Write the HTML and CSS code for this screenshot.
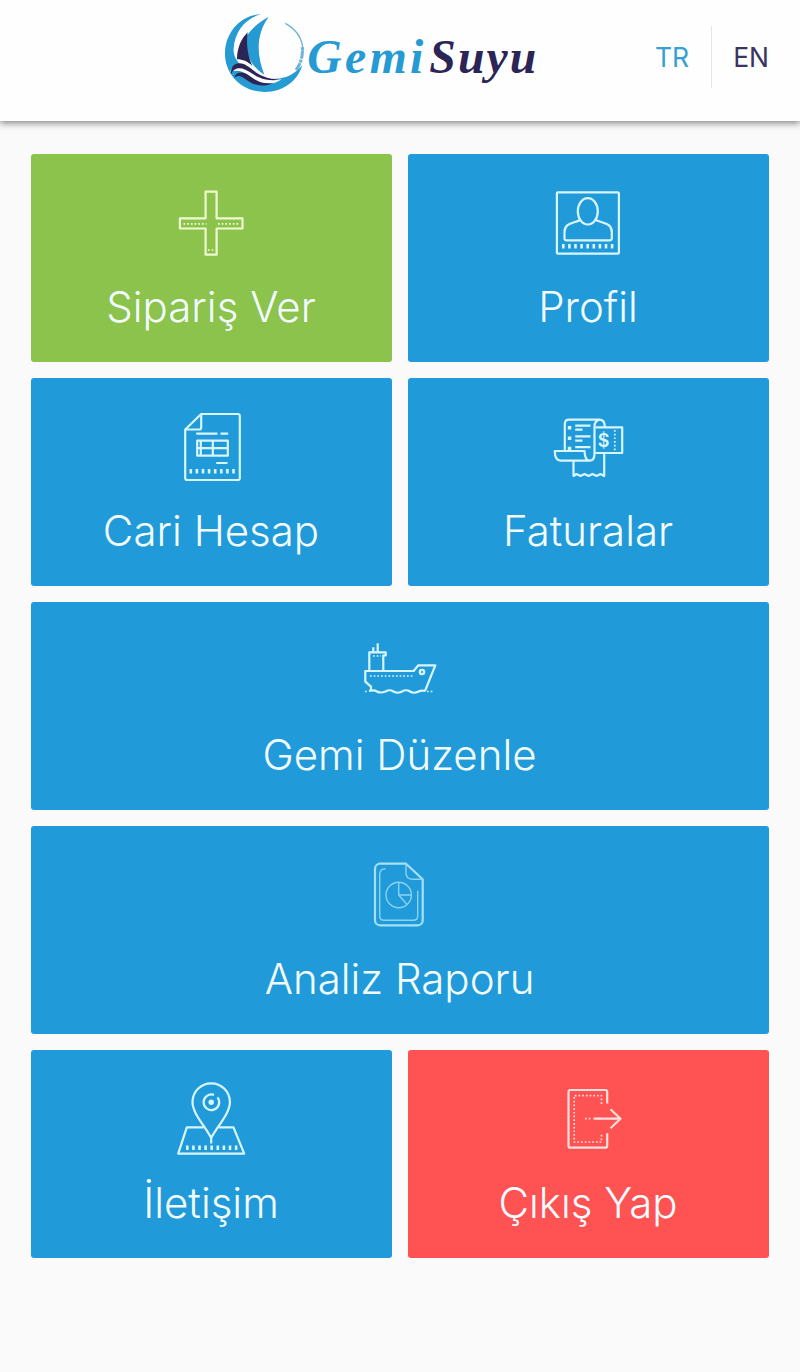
FILE: index.html
```html
<!DOCTYPE html>
<html lang="tr">
<head>
    <meta charset="UTF-8">
    <meta name="viewport" content="width=device-width, initial-scale=1.0">
    <title>GemiSuyu</title>
    <link rel="stylesheet" href="styles.css">
</head>
<body>

    <header class="header">
        <svg class="logo" viewBox="0 0 1005 330" aria-label="GemiSuyu">
            <!-- ring -->
            <path class="logo-blue" d="M138 28C75 30 30 85 30 146c0 64 52 115 120 115 56 0 98-34 112-80-25 28-52 43-92 40-30-4-49-29-78-31-24-15-38-35-36-60 3-50 36-91 82-102z"/>
            <path class="logo-line" d="M211 55c33 18 52 47 53 83"/>
            <path class="logo-line wide-line" d="M243 195c15-20 21-42 19-70"/>
            <!-- sails -->
            <path class="logo-blue" d="M161 36c-24 12-50 32-66 57-4 38 0 83 53 116-24-61-25-121 13-173z"/>
            <path class="logo-navy" d="M98 82C80 100 66 128 66 163c17 0 32 6 46 20-14-30-19-65-14-101z"/>
            <!-- waves -->
            <path class="logo-white" d="M46 200c4-20 28-25 48-16 35 17 54 38 106 39-35 26-79 9-98-9-18-18-38-20-56-14z"/>
            <path class="logo-navy" d="M48 207c-1-21 9-31 25-32 25 0 39 25 70 38 17 8 36 10 55 10-40 8-65-3-88-18-25-17-48-24-62 2z"/>
            <path class="logo-navy" d="M58 218c4-18 26-20 43-7 22 17 46 29 75 22-37 18-67 4-84-10-13-11-23-14-34-5z"/>
            <text class="logo-text logo-blue" x="277" y="203" textLength="348">Gemi</text>
            <text class="logo-text logo-navy" x="643" y="203" textLength="321">Suyu</text>
        </svg>
        <nav class="lang">
            <a class="lang-link active">TR</a>
            <a class="lang-link">EN</a>
        </nav>
    </header>

    <main class="menu">
        <a class="tile green">
            <svg class="icon" viewBox="0 0 80 80">
                <path d="M34.6 9.7h11v26.6h25.9v10.2H45.6v26.2h-11V46.5H8.9V36.3h25.7z"/>
                <path class="dots" d="M12.5 41.8h23M47 41.8h22M37 68h7"/>
            </svg>
            <span class="label">Sipariş Ver</span>
        </a>

        <a class="tile">
            <svg class="icon" viewBox="0 0 80 80">
                <rect x="8.9" y="10.3" width="62" height="61.4" rx="1"/>
                <ellipse cx="39.8" cy="29.3" rx="10" ry="13.2"/>
                <path d="M32 38c-6 3.5-15.5 2.5-15.5 12v6.300a2 2 0 0 0 2 2h43.300a2 2 0 0 0 2-2V50c0-9.500-9.500-8.500-16-12"/>
                <path class="ticks" d="M14 64.300h52"/>
            </svg>
            <span class="label">Profil</span>
        </a>

        <a class="tile">
            <svg class="icon" viewBox="0 0 80 80">
                <path d="M30.200 8h36.600a2 2 0 0 1 2 2v62a2 2 0 0 1-2 2H16.200a2 2 0 0 1-2-2V23.500z"/>
                <path d="M30.200 8v13.500a2 2 0 0 1-2 2h-14"/>
                <path d="M25.200 27.700h21.300M49.500 27.700h7.700M45.200 57h11.300"/>
                <path d="M26.200 34.700h30.600v15H26.200zM29.800 34.700v15M41.800 34.700v15M26.200 42.200h30.600"/>
                <path class="ticks" d="M18.500 65.200h46"/>
            </svg>
            <span class="label">Cari Hesap</span>
        </a>

        <a class="tile">
            <svg class="icon" viewBox="0 0 80 80">
                <path d="M16.800 44V18q0-4.300 4.500-4.300h30q5.500 0 5.500 7.300"/>
                <path d="M51.500 13.700q-5 1-5 7.300v27q0 6.700-5 6.700-4.500 0-5-9.700H6.800q0 9.700 6 9.700h28.700"/>
                <path d="M47.500 21.300h26.700V47H47.500"/>
                <path d="M25.500 55v15l3-2 4 2 4-2 4 2 4-2 4 2 4-2 3.700 2V47"/>
                <path d="M27.200 19.700h15.300M27.200 23.700h7.300M27.200 30.300h15.300M27.200 34.700h7.300M27.200 41.200h15.300"/>
                <path class="bullets" d="M19.800 21.700h3.500M19.800 32.300h3.500M19.800 42.500h3.500"/>
                <path class="dots" d="M66.800 24v22"/>
                <text class="dollar" x="55.700" y="41" text-anchor="middle">$</text>
            </svg>
            <span class="label">Faturalar</span>
        </a>

        <a class="tile wide">
            <svg class="icon" viewBox="0 0 80 80">
                <path d="M11 61v-4.300l-5.700-5V41h48.400l4.600-5.700h17L65 61"/>
                <path d="M9.300 41V22.300h16.400v3.200h-2.400V41M17.700 22v-8.700M13.300 22v-4.700"/>
                <circle cx="62" cy="42" r="2.200"/>
                <path d="M9 61q5-1.500 8 .5t8.500 0q4-2.500 8 0t8.500 0q4-2.500 8 0t8.500 0q3-1.500 7-.5"/>
                <path class="dots" d="M5 61.500h3M67 61.500h6M10 46h44M13 26h8"/>
            </svg>
            <span class="label">Gemi Düzenle</span>
        </a>

        <a class="tile wide">
            <svg class="icon" viewBox="0 0 80 80">
                <path class="soft" d="M46 9.700H20a5 5 0 0 0-5 5v51.600a5 5 0 0 0 5 5h37.700a5 5 0 0 0 5-5v-41z"/>
                <path class="thin" d="M46 9.700v9q0 6.600 7 6.600h9.700M25.700 14.700q-6 0-6 6V62q0 4.300 4.300 4.300h29.400q4.300 0 4.300-4.300V36.700"/>
                <circle class="thin" cx="38.700" cy="41" r="12.700"/>
                <path class="thin" d="M38.700 28.300V41h12.700M38.700 41l8.300 9.500"/>
            </svg>
            <span class="label">Analiz Raporu</span>
        </a>

        <a class="tile">
            <svg class="icon" viewBox="0 0 80 80">
                <path d="M40.200 65.500V60C35 49 21.500 36 21.500 24a18.700 18.700 0 0 1 37.400 0c0 12-13.500 25-18.700 36"/>
                <path d="M32.500 49.300H15.800L7.200 75.700h66L62.500 49.300H47.900"/>
                <path d="M43 16.900a7.800 7.800 0 1 0 3.500 2.500"/>
                <circle class="fill" cx="40.200" cy="24.300" r="2.700"/>
                <path class="ticks" d="M15 69.800h52"/>
            </svg>
            <span class="label">İletişim</span>
        </a>

        <a class="tile red">
            <svg class="icon" viewBox="0 0 80 80">
                <path d="M59.200 25.500V14a2 2 0 0 0-2-2H22.500a2 2 0 0 0-2 2v53.700a2 2 0 0 0 2 2h34.700a2 2 0 0 0 2-2V55.300"/>
                <path d="M45.500 40.700h27M62.500 31.300l10 9.400-10 9.600"/>
                <path class="dots" d="M53.500 26v-8.300H26.200V64h27.300v-9M37 40.700h7"/>
            </svg>
            <span class="label">Çıkış Yap</span>
        </a>
    </main>

</body>
</html>
```
FILE: styles.css
```css
* {
    box-sizing: border-box;
}
body {
    margin: 0;
    background-color: #fafafa;
    font-family: Inter, "Liberation Sans", sans-serif;
}
.header {
    display: flex;
    align-items: flex-start;
    height: 121px;
    padding: 5px 0 0 215px;
    background-color: #fefefe;
    box-shadow: 0 2px 7px rgba(0, 0, 0, 0.5);
}
.logo {
    width: 335px;
    height: 110px;
}
.logo-blue {
    fill: #259ad3;
}
.logo-navy {
    fill: #2b2455;
}
.logo-white {
    fill: #fefefe;
}
.logo-line {
    fill: none;
    stroke: #6ab4d8;
    stroke-width: 4;
}
.logo-line.wide-line {
    stroke-width: 9;
    stroke-dasharray: 24 2 9 3;
}
.logo-text {
    font-family: "Liberation Serif", serif;
    font-size: 143px;
    font-weight: bold;
    font-style: italic;
}
.lang {
    display: flex;
    margin: 21px 0 0 83px;
}
.lang-link {
    height: 62px;
    padding: 0 21px;
    font-size: 26.5px;
    line-height: 62px;
    color: #3a3560;
}
.lang-link.active {
    padding: 0 22px;
    border-right: 1px solid #e6e6e6;
    color: #35a0d2;
}
.menu {
    display: grid;
    grid-template-columns: 1fr 1fr;
    grid-auto-rows: 208px;
    gap: 16px;
    padding: 33px 31px;
}
.tile {
    display: flex;
    flex-direction: column;
    align-items: center;
    padding: 28px 1px 0 0;
    border-radius: 3px;
    background-color: #209ad8;
    color: #f2fcff;
}
.tile.wide {
    grid-column: span 2;
}
.tile.green {
    background-color: #8bc34c;
}
.tile.red {
    background-color: #ff5252;
}
.icon {
    width: 80px;
    height: 80px;
    fill: none;
    stroke: #d8f6ff;
    stroke-width: 2.2;
    stroke-linejoin: round;
}
.green .icon {
    stroke: #effbd0;
}
.red .icon {
    stroke: #ffe0dc;
}
.icon .dots {
    stroke-width: 1.7;
    stroke-dasharray: 1.7 2;
}
.icon .ticks {
    stroke-width: 4.5;
    stroke-dasharray: 2.6 3.5;
}
.icon .bullets {
    stroke-width: 3.5;
}
.icon .soft {
    stroke: #a5e0f8;
}
.icon .thin {
    stroke: #8bd3f2;
    stroke-width: 1.4;
}
.icon .fill {
    fill: #d8f6ff;
    stroke: none;
}
.icon .dollar {
    fill: #d8f6ff;
    stroke: none;
    font-size: 18px;
    font-weight: 600;
}
.label {
    margin-top: 19px;
    font-size: 42px;
    font-weight: 340;
    line-height: 52px;
    white-space: nowrap;
}
```
